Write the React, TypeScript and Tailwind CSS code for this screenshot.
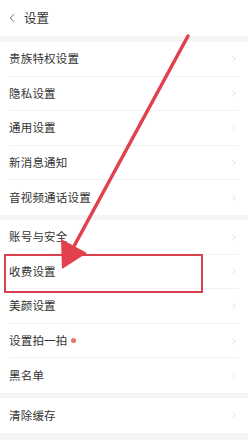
import { ChevronLeft, ChevronRight } from "lucide-react";

const groups: { label: string; dot?: boolean }[][] = [
  [
    { label: "贵族特权设置" },
    { label: "隐私设置" },
    { label: "通用设置" },
    { label: "新消息通知" },
    { label: "音视频通话设置" },
  ],
  [
    { label: "账号与安全" },
    { label: "收费设置" },
    { label: "美颜设置" },
    { label: "设置拍一拍", dot: true },
    { label: "黑名单" },
  ],
  [{ label: "清除缓存" }],
];

function Row({ label, dot, last }: { label: string; dot?: boolean; last: boolean }) {
  return (
    <div className="flex h-[34.6px] items-center pl-[9px] pr-[9px]">
      <div className={`flex h-full flex-1 items-center ${last ? "" : "border-b border-[#f2f2f2]"}`}>
        <span className="text-[11.5px] tracking-[0.2px] text-[#333]">{label}</span>
        {dot && <span className="ml-[3px] h-[5px] w-[5px] rounded-full bg-[#ec735f]" />}
        <span className="flex-1" />
        <ChevronRight className="h-[10px] w-[10px] text-[#cbcbcb]" strokeWidth={1.5} />
      </div>
    </div>
  );
}

export default function App() {
  return (
    <div
      className="relative h-[440px] w-[248px] overflow-hidden bg-[#f5f5f5]"
      style={{ fontFamily: '"Noto Sans CJK SC", "Noto Sans", sans-serif' }}
    >
      <div className="flex h-[36px] items-center bg-white pl-[5px]">
        <ChevronLeft className="h-[14px] w-[14px] text-[#555]" strokeWidth={1.5} />
        <span className="ml-[5px] text-[12.5px] text-[#333]">设置</span>
      </div>

      <div className="mt-[6px] flex flex-col gap-[5px]">
        {groups.map((g, gi) => (
          <div key={gi} className="bg-white">
            {g.map((r, i) => (
              <Row key={r.label} label={r.label} dot={r.dot} last={i === g.length - 1} />
            ))}
          </div>
        ))}
      </div>

      {/* highlight box */}
      <div className="absolute left-[4px] top-[254px] h-[39px] w-[199px] border-2 border-[#d9424d]" />

      {/* arrow */}
      <svg className="absolute left-0 top-0" width="248" height="440" viewBox="0 0 248 440">
        <line x1="188" y1="36" x2="73" y2="248" stroke="#e2404c" strokeWidth="3.5" strokeLinecap="round" />
        <polygon points="62,269 61,239 87,253" fill="#e2404c" />
      </svg>
    </div>
  );
}
